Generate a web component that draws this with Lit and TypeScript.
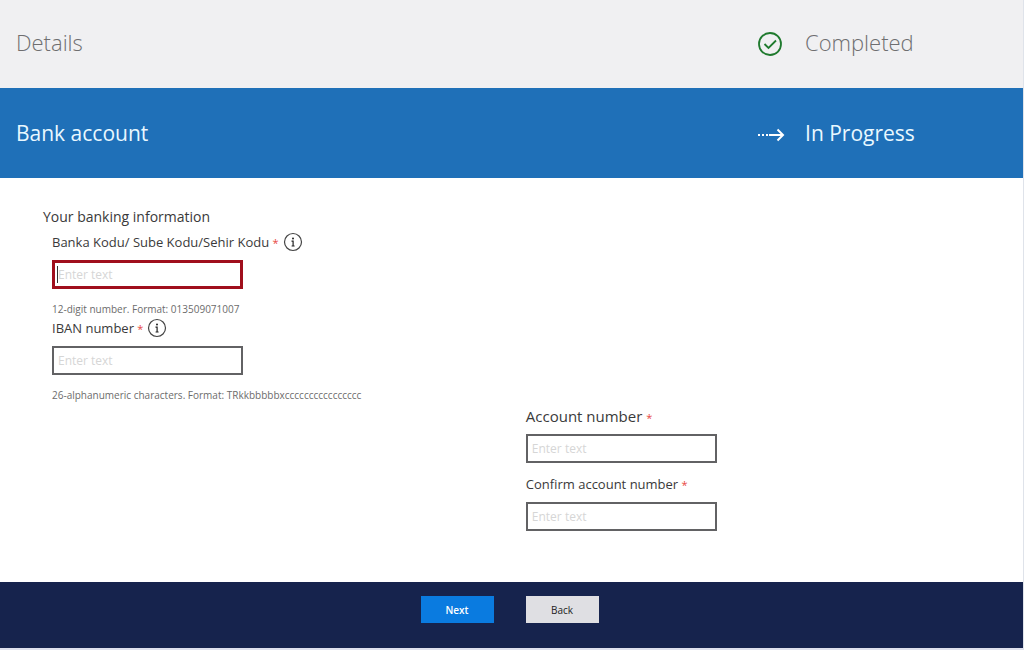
import { LitElement, html, css, svg, nothing } from "lit";
import { customElement, property } from "lit/decorators.js";

const checkIcon = svg`<svg width="26" height="26" viewBox="0 0 26 26" fill="none" stroke="#1f7a2e" aria-hidden="true">
  <circle cx="13" cy="13" r="11" stroke-width="1.8"/>
  <path d="M7.5 13l4 4 7.5-7.5" stroke-width="1.8"/>
</svg>`;

const progressIcon = svg`<svg width="28" height="14" viewBox="0 0 28 14" fill="none" stroke="#fff" aria-hidden="true">
  <path d="M1 7h2M5 7h2M9 7h2" stroke-width="1.8"/>
  <path d="M12 7h14M20.500 1.500L26 7l-5.500 5.500" stroke-width="2"/>
</svg>`;

const infoIcon = svg`<svg width="20" height="20" viewBox="0 0 20 20" fill="none" aria-hidden="true">
  <circle cx="10" cy="10" r="8.500" stroke="#444" stroke-width="1.2"/>
  <circle cx="10" cy="6.500" r="1" fill="#222"/>
  <path d="M8.500 9.200h1.600v4.600M8.600 14h3" stroke="#222" stroke-width="1.200"/>
</svg>`;

@customElement("wizard-step")
export class WizardStep extends LitElement {
  @property() name = "";
  @property() status = "";
  @property({ type: Boolean, reflect: true }) active = false;

  static styles = css`
    :host {
      display: grid;
      grid-template-columns: 74fr 26fr;
      align-items: center;
      height: 88px;
      box-sizing: border-box;
      padding-bottom: 4px;
      background: #f0f0f2;
      color: #6e6e70;
      font-size: 22px;
      line-height: 30px;
      font-weight: 300;
    }
    :host([active]) {
      height: 90px;
      padding-bottom: 0;
      background: #1f70b8;
      color: #e9f8ff;
      font-size: 21px;
      font-weight: 400;
    }
    .name {
      margin: 0;
      padding-left: 16px;
      font: inherit;
    }
    .status {
      display: grid;
      grid-template-columns: 48px 1fr;
      align-items: center;
    }
    svg {
      display: block;
      margin-top: 4px;
    }
  `;

  render() {
    return html`
      <h2 class="name">${this.name}</h2>
      <div class="status">
        ${this.active ? progressIcon : checkIcon}
        <span>${this.status}</span>
      </div>
    `;
  }
}

@customElement("text-field")
export class TextField extends LitElement {
  @property() label = "";
  @property() hint = "";
  @property() size: "regular" | "large" = "regular";
  @property({ type: Boolean }) info = false;
  @property({ type: Boolean }) invalid = false;

  static styles = css`
    :host {
      display: block;
      font-size: 13px;
    }
    .head {
      display: flex;
      align-items: center;
      gap: 4px;
      height: 24px;
      margin-bottom: 6px;
      color: #3a3a3a;
      white-space: nowrap;
    }
    .large {
      font-size: 15px;
    }
    .star {
      font-size: 11px;
      color: #e8493f;
    }
    .info {
      display: block;
      padding: 0;
      border: 0;
      background: none;
    }
    svg {
      display: block;
    }
    input {
      display: block;
      box-sizing: border-box;
      width: 191px;
      height: 29px;
      padding: 0 4px;
      border: 2px solid #626264;
      border-radius: 0;
      outline: none;
      background: #fff;
      font: inherit;
      font-size: 12px;
      color: #333;
    }
    input::placeholder {
      color: #d6d6d6;
      opacity: 1;
    }
    .invalid {
      border: 3px solid #a00f1c;
      padding: 0 3px;
      background: linear-gradient(#333, #333) 2px 50% / 1px 17px no-repeat #fff;
    }
    .hint {
      margin: 14px 0 0;
      font-size: 10px;
      line-height: 13px;
      color: #6c6c6c;
    }
  `;

  render() {
    return html`
      <div class="head ${this.size}">
        <label for="box">${this.label} <span class="star">*</span></label>
        ${this.info
          ? html`<button class="info" type="button" aria-label="More information">${infoIcon}</button>`
          : nothing}
      </div>
      <input id="box" class=${this.invalid ? "invalid" : ""} type="text" placeholder="Enter text" required />
      ${this.hint ? html`<p class="hint">${this.hint}</p>` : nothing}
    `;
  }
}

@customElement("app-root")
export class AppRoot extends LitElement {
  static styles = css`
    :host {
      display: flex;
      flex-direction: column;
      box-sizing: border-box;
      min-height: 100vh;
      border-right: 1px solid #dfe3ea;
      border-bottom: 2px solid #dfe1ee;
      background: #fff;
      font-family: "Open Sans", "Noto Sans", sans-serif;
    }
    main {
      flex: 1;
      padding: 29px 0 24px;
    }
    .title {
      margin: 0 0 3px 43px;
      font-size: 14px;
      line-height: 20px;
      font-weight: 400;
      color: #3a3a3a;
    }
    .codes {
      padding-left: 52px;
    }
    .accounts {
      display: grid;
      gap: 9px;
      margin-top: 2px;
      padding-left: 51.4%;
    }
    footer {
      display: grid;
      grid-template-columns: 1fr 1fr;
      column-gap: 32px;
      height: 66px;
      box-sizing: border-box;
      padding: 14px 4px 14px 0;
      background: #16234d;
    }
    footer button {
      width: 73px;
      height: 27px;
      padding: 0;
      border: 0;
      font-family: inherit;
      font-size: 10px;
    }
    .next {
      justify-self: end;
      background: #0a7be0;
      color: #fff;
      font-weight: 600;
    }
    .back {
      background: #dfdfe3;
      color: #222;
    }
  `;

  render() {
    return html`
      <wizard-step name="Details" status="Completed"></wizard-step>
      <wizard-step name="Bank account" status="In Progress" active></wizard-step>
      <main>
        <h3 class="title">Your banking information</h3>
        <div class="codes">
          <text-field
            label="Banka Kodu/ Sube Kodu/Sehir Kodu"
            hint="12-digit number. Format: 013509071007"
            info
            invalid
          ></text-field>
          <text-field
            label="IBAN number"
            hint="26-alphanumeric characters. Format: TRkkbbbbbxcccccccccccccccc"
            info
          ></text-field>
        </div>
        <div class="accounts">
          <text-field label="Account number" size="large"></text-field>
          <text-field label="Confirm account number"></text-field>
        </div>
      </main>
      <footer>
        <button class="next" type="button">Next</button>
        <button class="back" type="button">Back</button>
      </footer>
    `;
  }
}
